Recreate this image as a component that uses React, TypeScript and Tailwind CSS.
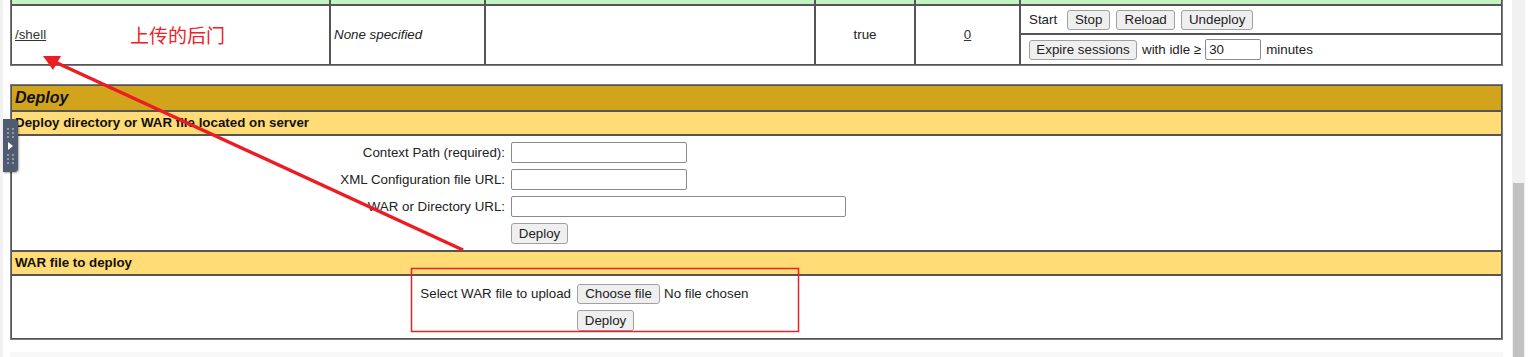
import React from "react";

const cell = "border border-[#555]";
const btn =
  "flex h-[20px] items-center justify-center rounded-[3px] border border-[#a0a0a0] bg-[#efefef] text-[13.33px] leading-none text-[#222]";
const field = "h-[21px] rounded-[2px] border border-[#8a8a8a] bg-white px-[3px] text-[13.33px] text-[#222] outline-none";

function Btn({ label, w }: { label: string; w: string }) {
  return (
    <button type="button" className={`${btn} ${w}`}>
      {label}
    </button>
  );
}

function AppsTable() {
  return (
    <div className="-mt-[20px] grid grid-cols-[319px_155px_330px_100px_105px_482px] grid-rows-[24px_29px_31px] border border-[#7a7a7a] text-[13.33px] text-[#222]">
      {[0, 1, 2, 3, 4, 5].map((i) => (
        <div key={i} className={`${cell} bg-[#c3f3c3]`} />
      ))}
      <div className={`${cell} row-span-2 flex items-center pl-[3px]`}>
        <a className="text-[#333] underline">/shell</a>
      </div>
      <div className={`${cell} row-span-2 flex items-center pl-[3px] italic`}>None specified</div>
      <div className={`${cell} row-span-2`} />
      <div className={`${cell} row-span-2 flex items-center justify-center`}>true</div>
      <div className={`${cell} row-span-2 flex items-center justify-center`}>
        <a className="text-[#333] underline">0</a>
      </div>
      <div className={`${cell} flex items-center pl-[8px]`}>
        <span className="mr-[10px]">Start</span>
        <div className="flex gap-[6px]">
          <Btn label="Stop" w="w-[43px]" />
          <Btn label="Reload" w="w-[59px]" />
          <Btn label="Undeploy" w="w-[72px]" />
        </div>
      </div>
      <div className={`${cell} flex items-center pl-[8px]`}>
        <Btn label="Expire sessions" w="w-[108px]" />
        <span className="ml-[5px]">with idle ≥</span>
        <input readOnly value="30" className={`${field} ml-[4px] w-[56px]`} />
        <span className="ml-[5px]">minutes</span>
      </div>
    </div>
  );
}

function DeployTable() {
  const rows = [
    { label: "Context Path (required):", w: "w-[176px]" },
    { label: "XML Configuration file URL:", w: "w-[176px]" },
    { label: "WAR or Directory URL:", w: "w-[335px]" },
  ];
  return (
    <div className="mt-[18px] flex flex-col border border-[#7a7a7a] text-[13.33px] text-[#222]">
      <div className={`${cell} flex h-[26px] items-center bg-[#d2a41c] pl-[3px] text-[16px] font-bold italic text-[#111]`}>
        Deploy
      </div>
      <div className={`${cell} flex h-[24px] items-center bg-[#ffdc75] pl-[3px] font-bold text-[#111]`}>
        Deploy directory or WAR file located on server
      </div>
      <div className={`${cell} h-[116px] p-[3px]`}>
        <div className="grid grid-cols-[493px_1fr] auto-rows-[27px]">
          {rows.map((r) => (
            <React.Fragment key={r.label}>
              <div className="flex items-center justify-end pr-[3px]">{r.label}</div>
              <div className="flex items-center pl-[3px]">
                <input readOnly className={`${field} ${r.w}`} />
              </div>
            </React.Fragment>
          ))}
          <div />
          <div className="flex items-center pl-[3px]">
            <Btn label="Deploy" w="w-[57px] h-[21px]" />
          </div>
        </div>
      </div>
      <div className={`${cell} flex h-[24px] items-center bg-[#ffdc75] pl-[3px] font-bold text-[#111]`}>
        WAR file to deploy
      </div>
      <div className={`${cell} h-[64px] p-[3px]`}>
        <div className="grid grid-cols-[559px_1fr] grid-rows-[28px_27px]">
          <div className="flex items-center justify-end pr-[3px] pt-[1px]">Select WAR file to upload</div>
          <div className="flex items-center pl-[3px] pt-[1px]">
            <Btn label="Choose file" w="w-[83px]" />
            <span className="ml-[4px]">No file chosen</span>
          </div>
          <div />
          <div className="flex items-center pl-[3px]">
            <Btn label="Deploy" w="w-[57px] h-[21px]" />
          </div>
        </div>
      </div>
    </div>
  );
}

function SideTab() {
  const dots = (
    <div className="grid grid-cols-2 gap-x-[3px] gap-y-[2px]">
      {Array.from({ length: 6 }).map((_, i) => (
        <span key={i} className="h-[2px] w-[2px] bg-[#8e99ab]" />
      ))}
    </div>
  );
  return (
    <div className="absolute left-[3px] top-[119px] flex h-[53px] w-[15px] flex-col items-center justify-center gap-[4px] rounded-r-[4px] bg-[#4f5b6f] shadow-[1px_1px_2px_rgba(0,0,0,0.35)]">
      {dots}
      <svg width="7" height="8" viewBox="0 0 7 8">
        <polygon points="1,0 6,4 1,8" fill="#ffffff" />
      </svg>
      {dots}
    </div>
  );
}

export default function App() {
  return (
    <div className="relative flex h-[357px] w-[1530px] overflow-hidden bg-white font-['Liberation_Sans','Noto_Sans_CJK_SC',sans-serif]">
      <div className="w-[3px] bg-[#f1f1f1]" />
      <main className="flex-1 pl-[7px] pr-[9px]">
        <AppsTable />
        <DeployTable />
        <div className="mt-[12px] h-[20px] bg-[#f8f8f8]" />
      </main>
      <div className="flex w-[13px] justify-center bg-[#f1f1f1] pt-[183px]">
        <div className="h-full w-[11px] bg-[#c1c1c1]" />
      </div>
      <div className="w-[5px]" />

      <SideTab />
      <span className="absolute left-[130px] top-[23px] text-[19px] leading-[24px] text-[#ec2227] font-['Noto_Sans_CJK_SC',sans-serif]">
        上传的后门
      </span>
      <svg className="pointer-events-none absolute inset-0" width="1530" height="357">
        <line x1="463" y1="250" x2="55" y2="62" stroke="#ec1c24" strokeWidth="3.5" />
        <polygon points="43,56 61,56 53,70" fill="#ec1c24" />
        <rect x="411.5" y="268.5" width="387" height="63" fill="none" stroke="#e8202a" strokeWidth="1.5" />
      </svg>
    </div>
  );
}
